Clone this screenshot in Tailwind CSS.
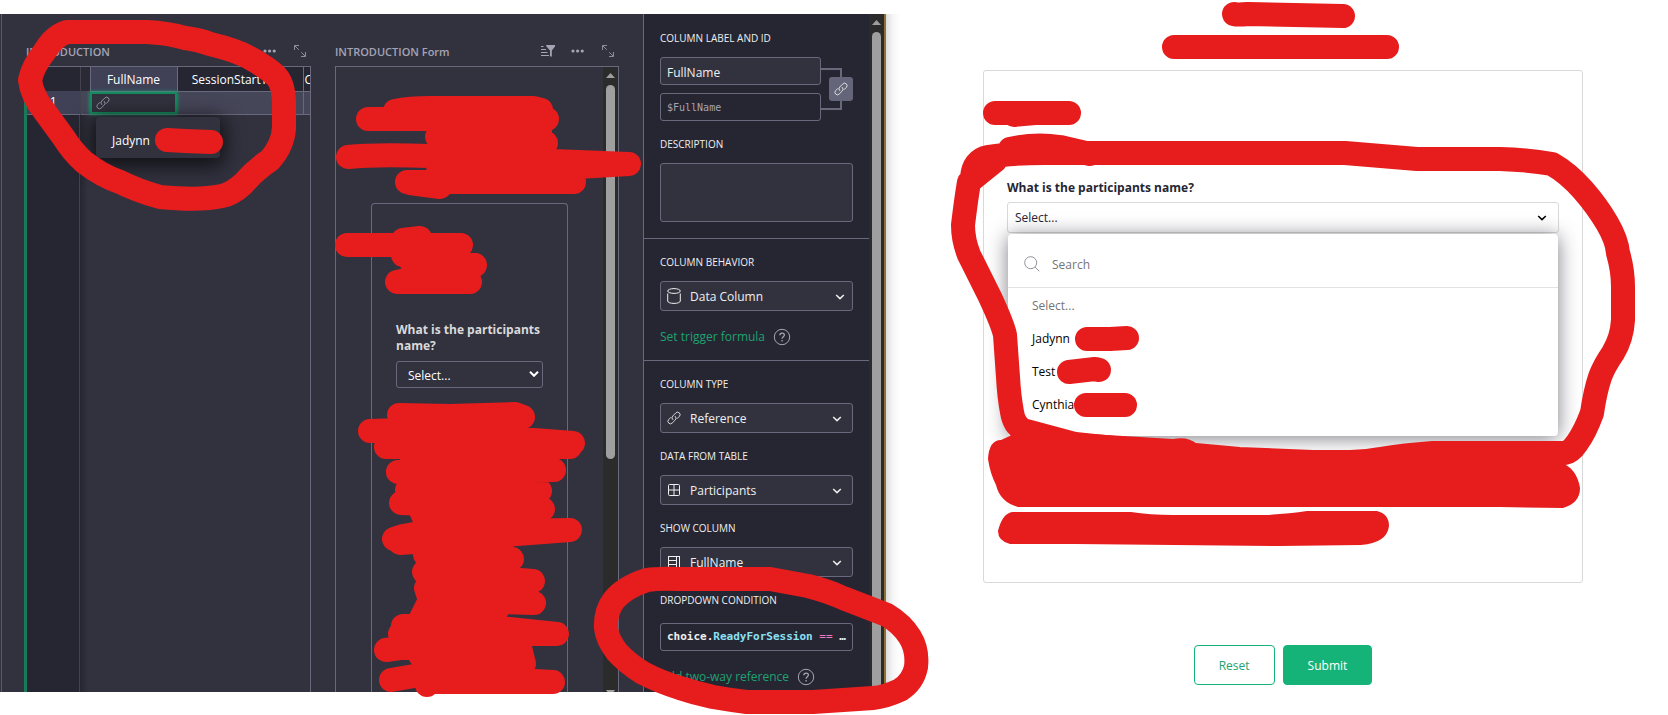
<!DOCTYPE html>
<html lang="en">
<head>
  <meta charset="UTF-8" />
  <meta name="viewport" content="width=device-width, initial-scale=1.0" />
  <script src="https://cdn.jsdelivr.net/npm/@tailwindcss/browser@4"></script>
  <title>Introduction</title>
</head>
<body class="relative bg-white font-['Open_Sans','Noto_Sans',sans-serif] text-[12px] leading-4 overflow-hidden">

  <!-- shared icons -->
  <svg class="hidden">
    <symbol id="link" viewBox="0 0 16 16" fill="none" stroke="currentColor" stroke-linecap="round" stroke-linejoin="round">
      <path d="M6.5 9.8a2.8 2.8 0 0 1 0-4l3.6-3.6a2.8 2.8 0 0 1 4 4l-2.3 2.3" />
      <path d="M9.5 6.2a2.8 2.8 0 0 1 0 4l-3.6 3.6a2.8 2.8 0 0 1-4-4l2.3-2.3" />
    </symbol>
    <symbol id="expand" viewBox="0 0 14 14" fill="none" stroke="currentColor" stroke-opacity=".8">
      <path d="M1.500 6V1.500H6M8 12.500h4.500V8M2 2l3.800 3.800M8.200 8.200L12 12" />
    </symbol>
    <symbol id="dots" viewBox="0 0 14 4" fill="currentColor">
      <circle cx="2" cy="2" r="1.600" /><circle cx="6.600" cy="2" r="1.600" /><circle cx="11.200" cy="2" r="1.600" />
    </symbol>
    <symbol id="chevron" viewBox="0 0 10 6" fill="none" stroke="currentColor" stroke-width="1.500">
      <path d="M1.200 1L5 4.600L8.800 1" />
    </symbol>
    <symbol id="help" viewBox="0 0 18 18" fill="none" stroke="currentColor">
      <circle cx="9" cy="9" r="7.700" />
      <path stroke-width="1.300" d="M6.800 7.300c0-3 4.600-2.900 4.600-.2 0 1.700-2.300 1.700-2.300 3.600M9.100 12v1.400" />
    </symbol>
  </svg>

  <div class="h-screen flex">

    <!-- editor -->
    <div class="flex-[886] min-w-0 pt-[14px] pb-[23px] flex">
      <div class="flex-1 min-w-0 flex bg-[#32323f] text-white overflow-hidden">
        <main class="flex-1 min-w-0 flex gap-6 pl-[22px] pr-6 ml-px border-l border-[#5b5b6b]">

          <section class="flex-[287] min-w-0 pt-[25px] flex flex-col">
            <header class="h-6 mb-[3px] flex items-center gap-4 pr-1 text-[#a4a4b5]">
              <h2 class="flex-1 text-[11px] font-semibold pl-0.5 pt-0.5">INTRODUCTION</h2>
              <button aria-label="Menu"><svg class="w-[14px] h-1"><use href="#dots" /></svg></button>
              <button aria-label="Expand"><svg class="w-[14px] h-[14px]"><use href="#expand" /></svg></button>
            </header>
            <div class="flex-1 flex flex-col border-t border-r border-[#69697d] border-l-3 border-l-[#177a58]">
              <table class="w-full table-fixed text-center border-collapse">
                <thead>
                  <tr class="h-6 bg-[#262633]">
                    <th class="w-[53px] border-r border-[#43434f]"></th>
                    <th class="w-[10px] bg-[#2a2a36]"></th>
                    <th class="w-[87px] pt-0.5 border border-t-0 border-[#69697d] bg-[#404057] font-normal">FullName</th>
                    <th class="w-[126px] pt-0.5 border border-t-0 border-[#69697d] font-normal">SessionStartTime</th>
                    <th class="pt-0.5 border-b border-[#69697d] font-normal text-left pl-px overflow-hidden">C</th>
                  </tr>
                </thead>
                <tbody>
                  <tr class="h-[23px] bg-[#464659] border-b border-[#69697d]">
                    <td class="bg-[#404057] border-r border-[#43434f]">1</td>
                    <td></td>
                    <td class="relative bg-[#32323f]">
                      <div class="absolute inset-0 border-2 border-[#158a5e] shadow-[0_0_4px_#16b378] flex items-center pl-1 text-[#a4a4b5]">
                        <svg class="w-[14px] h-[14px]"><use href="#link" /></svg>
                      </div>
                      <ul class="absolute left-[6px] top-[25px] w-[124px] h-[41px] flex items-center pl-4 pt-2 rounded-sm bg-[#32323f] shadow-[0_4px_20px_4px_#000000b0]">
                        <li>Jadynn</li>
                      </ul>
                    </td>
                    <td class="border-r border-[#69697d]"></td>
                    <td></td>
                  </tr>
                </tbody>
              </table>
              <div class="flex-1 flex">
                <div class="w-[53px] bg-[#262633] border-r border-[#43434f]"></div>
                <div class="w-2 bg-linear-to-r from-[#262630] to-[#32323f]"></div>
              </div>
            </div>
          </section>

          <section class="flex-[284] min-w-0 pt-[25px] flex flex-col">
            <header class="h-6 mb-[3px] flex items-center gap-4 pr-1 text-[#a4a4b5]">
              <h2 class="flex-1 text-[11px] font-semibold pt-0.5 whitespace-nowrap">INTRODUCTION Form</h2>
              <button aria-label="Sort and filter">
                <svg class="w-[14px] h-3" viewBox="0 0 14 12" fill="currentColor">
                  <path d="M5 0h9v1.500L10.800 5.500v6H9V5.500L5.500 1.500zM0 1h2.500v1H0zM0 4h5v1H0zM0 7h6.500v1H0zM0 10h8v1H0z" />
                </svg>
              </button>
              <button aria-label="Menu"><svg class="w-[14px] h-1"><use href="#dots" /></svg></button>
              <button aria-label="Expand"><svg class="w-[14px] h-[14px]"><use href="#expand" /></svg></button>
            </header>
            <div class="flex-1 flex border border-b-0 border-[#69697d]">
              <div class="flex-1 pt-[136px] pl-[35px] pr-[35px] flex">
                <div class="flex-1 pt-[118px] px-6 rounded-t border border-b-0 border-[#69697d]">
                  <label for="participant" class="block font-bold text-[#dadada]">What is the participants name?</label>
                  <div class="relative mt-[7px]">
                    <select id="participant" class="w-full h-[27px] appearance-none pl-[11px] pt-0.5 rounded-[3px] border border-[#69697d] bg-[#32323f] text-white">
                      <option>Select...</option>
                    </select>
                    <svg class="absolute right-1 top-[10px] w-[10px] h-[6px]" viewBox="0 0 10 6" fill="none" stroke="white" stroke-width="2"><path d="M1 .8L5 4.800L9 .8" /></svg>
                  </div>
                </div>
              </div>
              <div class="w-[15px] bg-[#2b2b2b] pt-1.5 flex flex-col items-center justify-between">
                <svg class="w-[9px] h-[5px]" viewBox="0 0 9 5" fill="#9f9f9f"><path d="M0 5L4.500 0L9 5z" /></svg>
                <div class="w-[9px] h-[374px] mt-[7px] mb-auto rounded-full bg-[#9f9f9f]"></div>
                <svg class="w-[9px] h-[2px]" viewBox="0 0 9 2" fill="#9f9f9f"><path d="M0 0H9L7.500 2H1.500z" /></svg>
              </div>
            </div>
          </section>
        </main>

        <!-- column options -->
        <aside class="w-[243px] shrink-0 flex bg-[#262633] border-l border-[#69697d] text-[#efefef]">
          <div class="flex-1 min-w-0">
            <div class="px-4 pt-4 pb-4 border-b border-[#69697d]">
              <label for="colLabel" class="block text-[10px] mb-[11px]">COLUMN LABEL AND ID</label>
              <div class="flex items-center">
                <div class="flex-1 min-w-0 flex flex-col gap-2">
                  <input id="colLabel" type="text" value="FullName" class="h-7 w-full px-1.5 pt-0.5 rounded-[3px] border border-[#69697d] bg-[#32323f]" />
                  <input aria-label="Column id" type="text" value="$FullName" class="h-7 w-full px-1.5 rounded-[3px] border border-[#69697d] font-['DejaVu_Sans_Mono',monospace] text-[10px] text-[#a4a4b5]" />
                </div>
                <div class="relative w-8 h-[42px]">
                  <div class="w-[21px] h-full border-2 border-l-0 border-[#69697d]"></div>
                  <button aria-label="Link label and id" class="absolute right-0 top-[9px] size-6 rounded-[3px] bg-[#65657a] flex items-center justify-center">
                    <svg class="w-[14px] h-[14px]"><use href="#link" /></svg>
                  </button>
                </div>
              </div>
              <label for="description" class="block text-[10px] mt-[15px] mb-[11px]">DESCRIPTION</label>
              <textarea id="description" class="block w-full h-[59px] resize-none rounded-[3px] border border-[#69697d] bg-[#32323f]"></textarea>
            </div>

            <div class="px-4 pt-[15px] pb-[13px] border-b border-[#69697d]">
              <label for="behavior" class="block text-[10px] mb-[11px]">COLUMN BEHAVIOR</label>
              <div class="relative">
                <select id="behavior" class="w-full h-[30px] appearance-none pl-[29px] pt-0.5 rounded-[3px] border border-[#69697d] bg-[#32323f]">
                  <option>Data Column</option>
                </select>
                <svg class="absolute left-[7px] top-[7px] w-[14px] h-4" viewBox="0 0 14 16" fill="none" stroke="currentColor">
                  <ellipse cx="7" cy="3" rx="6.300" ry="2.400" /><path d="M.7 5.500v7.500c0 3.200 12.600 3.200 12.600 0V5.500" />
                </svg>
                <svg class="absolute right-2 top-[13px] w-[10px] h-[6px]"><use href="#chevron" /></svg>
              </div>
              <div class="mt-4 h-5 flex items-center gap-2">
                <a href="#" class="text-[#1da270]">Set trigger formula</a>
                <svg class="w-[18px] h-[18px] text-[#a4a4b5]"><use href="#help" /></svg>
              </div>
            </div>

            <div class="px-4 pt-[15px]">
              <label for="type" class="block text-[10px] mb-[11px]">COLUMN TYPE</label>
              <div class="relative">
                <select id="type" class="w-full h-[30px] appearance-none pl-[29px] pt-0.5 rounded-[3px] border border-[#69697d] bg-[#32323f]">
                  <option>Reference</option>
                </select>
                <svg class="absolute left-[7px] top-2 w-[14px] h-[14px]"><use href="#link" /></svg>
                <svg class="absolute right-[11px] top-[13px] w-[10px] h-[6px]"><use href="#chevron" /></svg>
              </div>

              <label for="table" class="block text-[10px] mt-[15px] mb-[11px]">DATA FROM TABLE</label>
              <div class="relative">
                <select id="table" class="w-full h-[30px] appearance-none pl-[29px] pt-0.5 rounded-[3px] border border-[#69697d] bg-[#32323f]">
                  <option>Participants</option>
                </select>
                <svg class="absolute left-2 top-[9px] w-3 h-3" viewBox="0 0 12 12" fill="none" stroke="currentColor">
                  <rect x=".5" y=".5" width="11" height="11" rx="1" /><path d="M6 .5v11M.5 6h11" />
                </svg>
                <svg class="absolute right-[11px] top-[13px] w-[10px] h-[6px]"><use href="#chevron" /></svg>
              </div>

              <label for="showColumn" class="block text-[10px] mt-[15px] mb-[11px]">SHOW COLUMN</label>
              <div class="relative">
                <select id="showColumn" class="w-full h-[30px] appearance-none pl-[29px] pt-0.5 rounded-[3px] border border-[#69697d] bg-[#32323f]">
                  <option>FullName</option>
                </select>
                <svg class="absolute left-2 top-[9px] w-3 h-3" viewBox="0 0 12 12" fill="none" stroke="currentColor">
                  <rect x=".5" y=".5" width="11" height="11" /><path d="M8.500 .5v11M.5 4.500h8M.5 8.500h8" />
                </svg>
                <svg class="absolute right-[11px] top-[13px] w-[10px] h-[6px]"><use href="#chevron" /></svg>
              </div>

              <h3 class="text-[10px] mt-[15px] mb-[15px]">DROPDOWN CONDITION</h3>
              <div class="h-7 px-1.5 flex items-center whitespace-nowrap rounded-[3px] border border-[#69697d] font-bold text-[11px]">
                <code class="font-['DejaVu_Sans_Mono',monospace]">choice.<span class="text-[#8be0f5]">ReadyForSession</span> <span class="text-[#f078c0] font-normal">==</span> …</code>
              </div>
              <div class="mt-4 h-5 flex items-center gap-2">
                <a href="#" class="text-[#1da270]">Add two-way reference</a>
                <svg class="w-[18px] h-[18px] text-[#a4a4b5]"><use href="#help" /></svg>
              </div>
            </div>
          </div>
          <div class="w-[15px] bg-[#2b2b2b] pt-[6px] flex flex-col items-center">
            <svg class="w-[9px] h-[5px]" viewBox="0 0 9 5" fill="#9f9f9f"><path d="M0 5L4.500 0L9 5z" /></svg>
            <div class="w-[9px] flex-1 mt-[7px] rounded-t-full bg-[#9f9f9f]"></div>
          </div>
          <div class="w-0.5 bg-[#8e7032]"></div>
        </aside>
      </div>
    </div>

    <!-- published form -->
    <div class="flex-[782] min-w-0 flex text-[#262633]">
      <div class="w-[14px] mt-[14px] mb-[23px] bg-linear-to-r from-[#dddddd] via-[#f6f6f6] to-white"></div>
      <form class="flex-1 min-w-0 pt-[70px] pl-[83px] pr-[85px]">
        <div class="h-[513px] pt-[109px] px-[23px] rounded-[3px] border border-[#d9d9d9]">
          <label for="answer" class="block font-bold">What is the participants name?</label>
          <div class="relative mt-[6px]">
            <button id="answer" type="button" class="w-full h-[31px] flex items-center justify-between pl-[7px] pr-[11px] rounded-[3px] border border-[#d9d9d9]">
              <span>Select...</span>
              <svg class="w-[10px] h-[6px] text-black"><use href="#chevron" /></svg>
            </button>
            <div class="absolute inset-x-px top-8 h-[202px] rounded-sm bg-white text-black shadow-[0_2px_20px_#26263399]">
              <div class="h-[54px] pt-1.5 pl-4 flex items-center gap-3 border-b border-[#e2e2e2]">
                <svg class="w-4 h-4" viewBox="0 0 16 16" fill="none" stroke="#929299"><circle cx="6.700" cy="6.700" r="6" /><path d="M11 11l4.300 4.300" /></svg>
                <input type="text" aria-label="Search" placeholder="Search" class="flex-1 pt-0.5 outline-none placeholder:text-[#757575]" />
              </div>
              <ul class="pt-px pl-6 leading-[33px]">
                <li class="text-[#757575]">Select...</li>
                <li>Jadynn</li>
                <li>Test</li>
                <li>Cynthia</li>
              </ul>
            </div>
          </div>
        </div>
        <div class="mt-[62px] flex justify-center gap-2">
          <button type="reset" class="h-10 px-6 pt-0.5 rounded border border-[#16b378] text-[#1da270]">Reset</button>
          <button type="button" class="h-10 px-6 pt-0.5 rounded border border-[#16b378] bg-[#16b378] text-white">Submit</button>
        </div>
      </form>
    </div>
  </div>

  <!-- red marker strokes over both windows -->
  <svg class="absolute left-0 top-0 w-[1668px] h-[715px] pointer-events-none" viewBox="0 0 1668 715" fill="none" stroke="#e71d1d" stroke-width="24" stroke-linecap="round" stroke-linejoin="round">
    <path d="M67 32H147Q168 33 185 38Q200 40 210 44Q235 50 248 57Q268 68 276 76Q284 84 284 105V128Q283 145 270 160Q255 170 243 184Q232 194 222 196Q200 201 160 197Q138 191 120 182Q102 176 84 162Q72 151 64 138L45 112Q32 96 30 80Q33 66 45 51Q54 36 67 32Z" />
    <path d="M167 140L185 141L211 142" />

    <path d="M368 119H547M395 111Q410 108 430 108H533L541 110M437 137L546 143M348 157Q375 154 430 156L629 164L560 168M407 182H574M410 183L440 187M440 125H540V180H438ZM450 135H530V168H450Z" />
    <path d="M347 245H461M403 240L420 238M403 255L475 265L397 282H470M410 260H455V280" />
    <path d="M399 415L450 416L515 414L523 417M370 431L400 430L573 443M386 447H570M398 472L554 470M407 490L540 491M401 503L543 509M394 539Q410 532 450 532L570 530L400 543M425 555L512 559M424 572L533 581M426 588L430 600L534 603M403 626H480L557 634H400M386 650L400 648H520L524 664M391 680L420 675L553 682H427V685" />
    <path d="M412 420H512V450L522 480L528 520L500 540L510 590L490 620L510 670H430L410 640L430 600L435 550L425 520L412 490Z" fill="#e71d1d" />
    <path d="M606 628Q605 612 614 600Q625 587 647 580Q658 578 680 579H770L808 586Q828 591 843 598L887 615Q902 624 910 637Q918 650 916 667Q913 682 900 690Q885 697 873 698L813 702H747Q730 700 713 697Q695 693 680 688Q660 682 643 673Q628 664 617 652Q607 639 606 628Z" />

    <path d="M1234 14Q1238 15 1248 14L1343 16M1174 47H1387M995 113H1069M1014 115L1035 113" />
    <path d="M1087 339H1110L1127 338M1069 372L1095 369L1099 370M1086 405H1125" />
    <path d="M1010 149Q1035 143 1060 147L1090 154M972 178Q973 160 988 157Q1010 153 1045 153H1345L1417 159H1500Q1530 160 1552 164Q1568 173 1583 190Q1597 206 1607 223Q1617 240 1618 253Q1623 270 1623 287V320Q1622 338 1613 353Q1604 366 1600 377Q1595 392 1592 413Q1585 432 1577 443Q1571 452 1565 453H1433Q1405 455 1380 459Q1365 462 1350 462H1313L1239 459L1173 453Q1120 449 1075 444L1023 430Q1014 425 1012 412Q1009 396 1008 377L1005 335Q1003 325 990 297Q980 277 969 255Q963 240 963 225Q966 200 969 182L995 161" />
    <path d="M1001 440Q989 440 988 459Q990 473 996 485Q1000 502 1018 507H1500L1563 508Q1580 503 1580 488Q1577 470 1564 464V452L1350 462L1197 444Q1188 436 1173 439L1023 430Z" fill="#e71d1d" stroke="none" />
    <path d="M1012 512H1131Q1150 515 1173 515H1265Q1288 514 1307 511H1377Q1389 514 1389 526Q1387 543 1361 545L1280 546L1075 544H1010Q998 541 998 531Q1002 514 1012 512Z" fill="#e71d1d" stroke="none" />
  </svg>
</body>
</html>
